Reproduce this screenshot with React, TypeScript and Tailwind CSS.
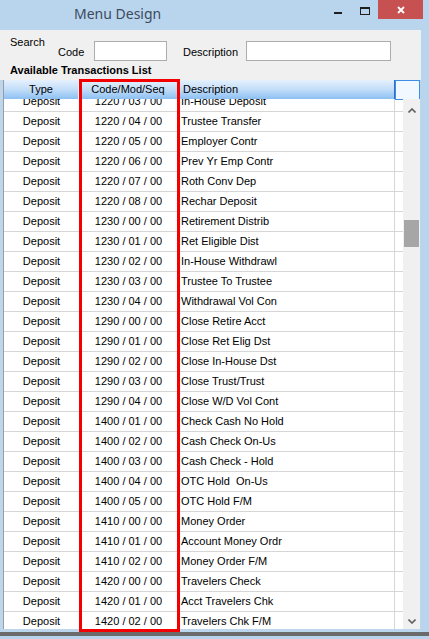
const rows: [string, string][] = [
  ['1220 / 03 / 00', 'In-House Deposit'],
  ['1220 / 04 / 00', 'Trustee Transfer'],
  ['1220 / 05 / 00', 'Employer Contr'],
  ['1220 / 06 / 00', 'Prev Yr Emp Contr'],
  ['1220 / 07 / 00', 'Roth Conv Dep'],
  ['1220 / 08 / 00', 'Rechar Deposit'],
  ['1230 / 00 / 00', 'Retirement Distrib'],
  ['1230 / 01 / 00', 'Ret Eligible Dist'],
  ['1230 / 02 / 00', 'In-House Withdrawl'],
  ['1230 / 03 / 00', 'Trustee To Trustee'],
  ['1230 / 04 / 00', 'Withdrawal Vol Con'],
  ['1290 / 00 / 00', 'Close Retire Acct'],
  ['1290 / 01 / 00', 'Close Ret Elig Dst'],
  ['1290 / 02 / 00', 'Close In-House Dst'],
  ['1290 / 03 / 00', 'Close Trust/Trust'],
  ['1290 / 04 / 00', 'Close W/D Vol Cont'],
  ['1400 / 01 / 00', 'Check Cash No Hold'],
  ['1400 / 02 / 00', 'Cash Check On-Us'],
  ['1400 / 03 / 00', 'Cash Check - Hold'],
  ['1400 / 04 / 00', 'OTC Hold  On-Us'],
  ['1400 / 05 / 00', 'OTC Hold F/M'],
  ['1410 / 00 / 00', 'Money Order'],
  ['1410 / 01 / 00', 'Account Money Ordr'],
  ['1410 / 02 / 00', 'Money Order F/M'],
  ['1420 / 00 / 00', 'Travelers Check'],
  ['1420 / 01 / 00', 'Acct Travelers Chk'],
  ['1420 / 02 / 00', 'Travelers Chk F/M'],
]

function TitleBar() {
  return (
    <div className="flex h-[30px] shrink-0 bg-[#b9d5ee]">
      <div className="pl-[74px] pt-[4px] font-['Noto_Sans',sans-serif] text-[14px] leading-[20px] text-[#3d4a5c]">
        Menu Design
      </div>
      <div className="ml-auto flex h-[20px] items-start">
        <div className="mt-[12px] h-[2px] w-[8px] bg-[#1e1e1e]" />
        <div className="ml-[18px] mt-[7px] h-[8px] w-[10px] border border-t-2 border-[#1e1e1e]" />
        <div className="ml-[8px] mr-[6px] flex h-[19px] w-[45px] items-center justify-center bg-[#c75050]">
          <svg width="8" height="8" viewBox="0 0 8 8">
            <path d="M1 1 L7 7 M7 1 L1 7" stroke="#fff" strokeWidth="1.8" />
          </svg>
        </div>
      </div>
    </div>
  )
}

function Chevron({ up }: { up?: boolean }) {
  return (
    <svg width="8" height="5" viewBox="0 0 8 5">
      <path d={up ? 'M0.5 4.5 L4 1 L7.5 4.5' : 'M0.5 0.5 L4 4 L7.5 0.5'} stroke="#606060" strokeWidth="1.6" fill="none" />
    </svg>
  )
}

function Grid() {
  return (
    <div className="mt-[3px] flex h-[552px] flex-col border-b-[3px] border-l-[3px] border-r border-[#bcd6ee]">
      <div className="flex flex-1 flex-col overflow-hidden border-l border-[#9c9c9c] bg-white">
        <div className="flex h-[19px] shrink-0 bg-gradient-to-b from-[#e6f1fd] via-[#c2ddf9] to-[#8cc0f2]">
          <div className="flex w-[75px] items-center justify-center border-r border-[#eef6ff]">Type</div>
          <div className="flex w-[99px] items-center justify-center border-r border-[#eef6ff]">Code/Mod/Seq</div>
          <div className="flex w-[217px] items-center border-r border-[#2f6fc0] pl-[5px]">Description</div>
          <div className="h-[20px] flex-1 border border-[#3d8ee6] bg-[#f2f8ff]" />
        </div>
        <div className="flex min-h-0 flex-1">
          <div className="w-[399px] overflow-hidden">
            <div className="mt-[-7px]">
              {rows.map(([code, desc]) => (
                <div key={code} className="flex h-[20px] border-b border-[#d6d6d6]">
                  <div className="flex w-[75px] items-center justify-center">Deposit</div>
                  <div className="flex w-[99px] items-center justify-center">{code}</div>
                  <div className="flex w-[217px] items-center whitespace-pre border-r border-[#d6d6d6] pl-[3px]">
                    {desc}
                  </div>
                </div>
              ))}
            </div>
          </div>
          <div className="flex w-[17px] flex-col items-center bg-[#f0f0f0]">
            <div className="mt-[9px] flex">
              <Chevron up />
            </div>
            <div className="mt-[107px] h-[27px] w-[15px] bg-[#a6a6a6]" />
            <div className="mb-[5px] mt-auto flex">
              <Chevron />
            </div>
          </div>
        </div>
      </div>
    </div>
  )
}

export default function App() {
  return (
    <div className="relative flex h-[639px] w-[429px] flex-col overflow-hidden bg-[#f0f0f0] font-['Liberation_Sans',Arial,sans-serif] text-[11px] leading-[13px] text-black">
      <TitleBar />
      <div className="flex h-[602px] shrink-0">
        <div className="flex w-[421px] flex-col">
          <div className="mt-[6px] flex h-[25px] items-end pl-[10px]">
            <span className="w-[48px] self-start">Search</span>
            <span className="mb-[2px] w-[36px]">Code</span>
            <div className="h-[20px] w-[73px] border border-[#acacac] bg-white" />
            <span className="mb-[2px] ml-[16px] w-[63px]">Description</span>
            <div className="h-[20px] w-[145px] border border-[#acacac] bg-white" />
          </div>
          <div className="mt-[3px] h-[13px] pl-[10px] font-bold">Available Transactions List</div>
          <Grid />
        </div>
        <div className="w-[8px] bg-[#b9d5ee]" />
      </div>
      <div className="h-[4px] shrink-0 bg-[#6b6b6b]" />
      <div className="flex-1 bg-[#b9d5ee]" />
      <div className="absolute left-[79px] top-[79px] h-[553px] w-[101px] border-[3px] border-[#f50000]" />
    </div>
  )
}
